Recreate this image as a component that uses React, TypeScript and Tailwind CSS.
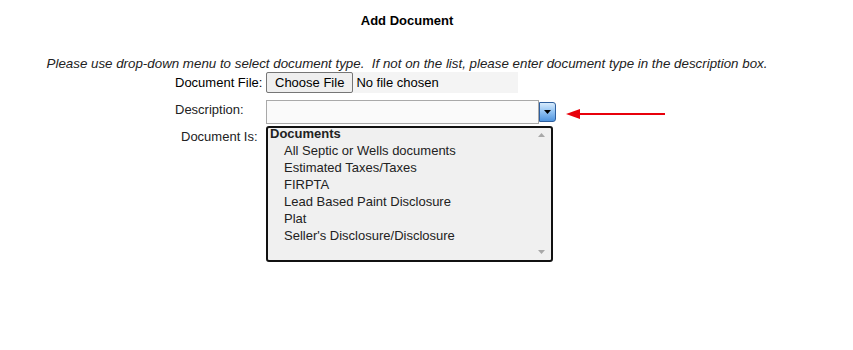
const items = [
  "All Septic or Wells documents",
  "Estimated Taxes/Taxes",
  "FIRPTA",
  "Lead Based Paint Disclosure",
  "Plat",
  "Seller's Disclosure/Disclosure",
];

function RedArrow() {
  return (
    <svg width="100" height="12" viewBox="0 0 100 12" className="ml-[10px] mt-[8px] block">
      <line x1="10" y1="6" x2="99" y2="6" stroke="#e8000b" strokeWidth="2" />
      <polygon points="0,6 14,1 14,11" fill="#e8000b" />
    </svg>
  );
}

export default function App() {
  return (
    <div className="min-h-[350px] w-[853px] bg-white font-['Liberation_Sans',Arial,sans-serif] text-[13px] text-black">
      <div className="w-[814px]">
        <div className="pt-[13px] text-center font-bold leading-[16px]">Add Document</div>
        <div className="mt-[27px] text-center text-[13.33px] italic leading-[15px] text-[#222]">
          Please use drop-down menu to select document type.&nbsp; If not on the list, please enter document type in the
          description box.
        </div>

        {/* Document File */}
        <div className="mt-[1px] flex h-[21px] items-center">
          <div className="w-[266px] pl-[175px] leading-[15px]">Document File:</div>
          <div className="flex h-[21px] w-[252px] items-center bg-[#f4f4f4]">
            <div className="flex h-[21px] items-center rounded-[2px] border border-[#767676] bg-[#efefef] px-[8px] leading-[15px]">
              Choose File
            </div>
            <span className="ml-[3px] leading-[15px]">No file chosen</span>
          </div>
        </div>

        {/* Description */}
        <div className="mt-[7px] flex h-[26px] items-start">
          <div className="w-[266px] pl-[175px] pt-[2px] leading-[15px] text-[#222]">Description:</div>
          <div className="h-[24px] w-[273px] border border-[#a9a9a9] bg-[#fafafa]" />
          <div className="mt-[2px] flex h-[20px] w-[17px] items-center justify-center rounded-r-[3px] border border-[#2e5f9e] bg-gradient-to-b from-[#d7ebfc] via-[#8fc1f2] to-[#4f94de]">
            <svg width="7" height="4" viewBox="0 0 7 4">
              <polygon points="0,0 7,0 3.5,4" fill="#000" />
            </svg>
          </div>
          <RedArrow />
        </div>

        {/* Document Is */}
        <div className="flex items-start">
          <div className="w-[266px] pl-[181px] pt-[3px] leading-[15px] text-[#222]">Document Is:</div>
          <div className="relative h-[136px] w-[287px] rounded-[3px] border-2 border-[#111] bg-[#f0f0f0] text-[#222]">
            <div className="h-[14px] pl-[2px] font-bold leading-[11px]">Documents</div>
            {items.map((it) => (
              <div key={it} className="h-[17px] pl-[16px] leading-[17px]">
                {it}
              </div>
            ))}
            <svg width="7" height="4" viewBox="0 0 7 4" className="absolute right-[6px] top-[5px]">
              <polygon points="3.5,0 7,4 0,4" fill="#a8a8a8" />
            </svg>
            <svg width="7" height="4" viewBox="0 0 7 4" className="absolute bottom-[6px] right-[6px]">
              <polygon points="0,0 7,0 3.5,4" fill="#a8a8a8" />
            </svg>
          </div>
        </div>
      </div>
    </div>
  );
}
